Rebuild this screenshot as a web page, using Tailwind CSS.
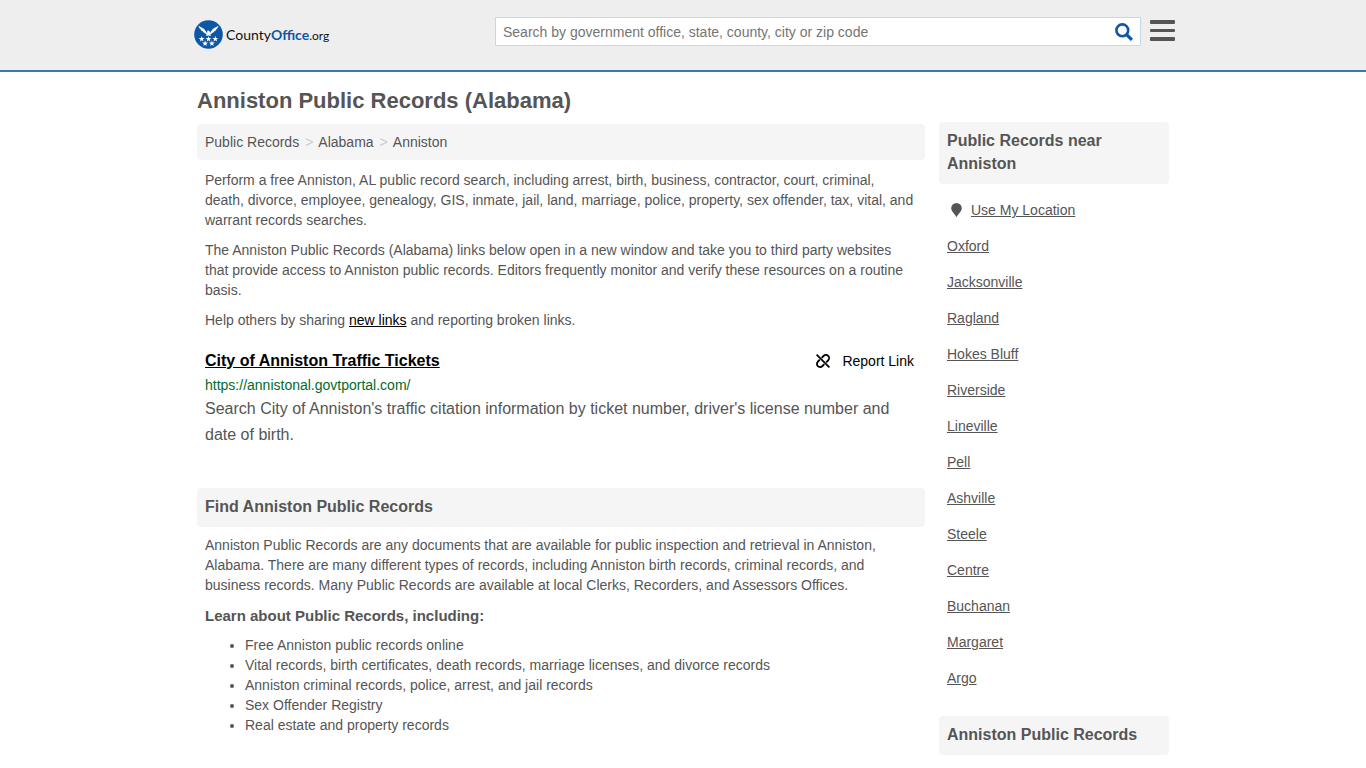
<!DOCTYPE html>
<html lang="en">
<head>
<meta charset="utf-8">
<meta name="viewport" content="width=device-width, initial-scale=1">
<title>Anniston Public Records (Alabama)</title>
<script src="https://cdn.jsdelivr.net/npm/@tailwindcss/browser@4"></script>
</head>
<body class="bg-white font-['Liberation_Sans',Arial,sans-serif] text-sm leading-5 text-[#555]">
<header class="border-b-2 border-[#337ab7] bg-[#eee] px-4">
  <div class="mx-auto flex h-[70px] max-w-[984px] items-start pl-[3px]">
    <a href="#" aria-label="CountyOffice.org" class="mt-5 flex shrink-0 items-center gap-[3px] font-[Lato,sans-serif] text-sm text-[#111]">
      <svg class="size-[29px]" viewBox="0 0 29 29" aria-hidden="true">
        <circle cx="14.5" cy="14.5" r="14.3" fill="#0d57a7"/>
        <g fill="#fff">
          <path d="M4.5 5.8C6.8 7.3 9.6 7.9 11.3 10.6L13.1 13.1L13.5 11.7L12.8 10.9L14.5 10.4L15.7 11.3L15.9 13.1L17.7 10.6C19.4 7.9 22.2 7.3 24.5 5.8C24.1 7.600 23.3 8.7 22.3 9.4C22.1 10.3 21.4 10.8 20.5 11.1C20 12.2 19.3 12.8 18.2 13.1L16.3 14.8L17 15.9L14.500 15.4L12 15.9L12.7 14.8L10.8 13.1C9.7 12.8 9 12.2 8.5 11.1C7.6 10.8 6.9 10.3 6.7 9.4C5.7 8.7 4.900 7.6 4.5 5.8Z"/>
          <path id="star" d="M7.7 15.9L8.4 18L10.6 18.1L8.9 19.4L9.5 21.5L7.7 20.3L5.9 21.5L6.5 19.4L4.8 18.1L7 18Z"/>
          <use href="#star" x="6.8"/><use href="#star" x="13.6"/>
          <use href="#star" x="3.4" y="4.5"/><use href="#star" x="10.2" y="4.5"/>
        </g>
      </svg>
      <span>County<span class="font-bold text-[#0d57a7]">Office</span><span class="text-xs">.org</span></span>
    </a>
    <form class="mt-[17px] ml-auto flex h-[29px] w-full max-w-[646px] border border-[#c5d9e8] bg-white" onsubmit="return false">
      <input type="text" aria-label="Search" placeholder="Search by government office, state, county, city or zip code" class="min-w-0 flex-1 px-[7px] text-sm outline-none placeholder:text-[#757575]">
      <button type="submit" aria-label="Search" class="flex w-8 items-center justify-center">
        <svg class="size-[18px]" viewBox="0 0 18 18" fill="none" stroke="#0d57a7" aria-hidden="true"><circle cx="7.3" cy="7.3" r="5.9" stroke-width="2.6"/><path d="M11.6 11.6L16.9 16.9" stroke-width="3.2"/></svg>
      </button>
    </form>
    <button type="button" aria-label="Menu" class="mt-5 ml-[9px] shrink-0">
      <svg class="h-[21px] w-[25px]" viewBox="0 0 25 21" fill="#555" aria-hidden="true"><rect width="25" height="4" rx="1"/><rect y="9" width="25" height="3" rx="1"/><rect y="17" width="25" height="4" rx="1"/></svg>
    </button>
  </div>
</header>
<div class="mx-auto flex max-w-[972px] items-start gap-3.5">
  <main class="min-w-0 flex-1">
    <h1 class="mt-[17px] mb-[11px] text-[22px] leading-6 font-bold">Anniston Public Records (Alabama)</h1>
    <nav aria-label="Breadcrumb" class="flex rounded-sm bg-[#f5f5f5] p-2">
      <a href="#">Public Records</a><span class="pr-[5px] pl-1.5 text-[#ccc]">&gt;</span>
      <a href="#">Alabama</a><span class="pr-[5px] pl-1.5 text-[#ccc]">&gt;</span>
      <span>Anniston</span>
    </nav>
    <div class="mt-2.5 space-y-2.5 px-2">
      <p>Perform a free Anniston, AL public record search, including arrest, birth, business, contractor, court, criminal, death, divorce, employee, genealogy, GIS, inmate, jail, land, marriage, police, property, sex offender, tax, vital, and warrant records searches.</p>
      <p>The Anniston Public Records (Alabama) links below open in a new window and take you to third party websites that provide access to Anniston public records. Editors frequently monitor and verify these resources on a routine basis.</p>
      <p>Help others by sharing <a href="#" class="text-black underline">new links</a> and reporting broken links.</p>
    </div>
    <article class="mt-[19px] px-2">
      <div class="flex items-center justify-between pr-[3px] text-black">
        <h2 class="text-base leading-6 font-bold"><a href="#" class="underline">City of Anniston Traffic Tickets</a></h2>
        <button type="button" class="flex items-center gap-3">
          <svg class="size-[14px]" viewBox="0 0 14 14" fill="none" stroke="#000" stroke-width="1.8" aria-hidden="true">
            <path d="M.6 .6L13.4 13.4"/>
            <path d="M5.700 3.800L7.5 2C8.9 .6 11 .6 12.2 1.8C13.4 3 13.4 5.1 12 6.5L10.200 8.300"/>
            <path d="M8.300 10.200L6.5 12C5.1 13.4 3 13.4 1.8 12.2C.6 11 .6 8.9 2 7.5L3.800 5.700"/>
          </svg>
          Report Link
        </button>
      </div>
      <p class="mt-0.5 mb-px text-[#006b2b]">https://annistonal.govtportal.com/</p>
      <p class="text-base leading-[26px]">Search City of Anniston's traffic citation information by ticket number, driver's license number and date of birth.</p>
    </article>
    <section class="mt-10">
      <h2 class="rounded-sm bg-[#f5f5f5] px-2 pt-[7px] pb-2 text-base leading-6 font-bold">Find Anniston Public Records</h2>
      <div class="px-2 pt-2">
        <p>Anniston Public Records are any documents that are available for public inspection and retrieval in Anniston, Alabama. There are many different types of records, including Anniston birth records, criminal records, and business records. Many Public Records are available at local Clerks, Recorders, and Assessors Offices.</p>
        <h3 class="mt-[11px] mb-[9px] text-[15px] leading-5 font-bold">Learn about Public Records, including:</h3>
        <ul class="list-disc pl-10">
          <li>Free Anniston public records online</li>
          <li>Vital records, birth certificates, death records, marriage licenses, and divorce records</li>
          <li>Anniston criminal records, police, arrest, and jail records</li>
          <li>Sex Offender Registry</li>
          <li>Real estate and property records</li>
        </ul>
      </div>
    </section>
  </main>
  <aside class="mt-[50px] w-[230px] shrink-0">
    <h2 class="rounded-sm bg-[#f5f5f5] px-2 pt-[7px] pb-[9px] text-base leading-[23px] font-bold">Public Records near Anniston</h2>
    <ul class="mt-2 mb-5 [&>li]:px-2 [&>li]:py-2 [&_a]:underline">
      <li class="flex items-center gap-[9px]">
        <svg class="ml-1 h-[14px] w-[11px]" viewBox="0 0 11 14" fill="#555" aria-hidden="true"><path d="M5.5 0A5.3 5.3 0 0 1 10.8 5.3C10.8 8.2 7.8 10.3 6 13.6Q5.5 14.2 5 13.6C3.2 10.3 .2 8.2 .2 5.3A5.3 5.3 0 0 1 5.5 0Z"/></svg>
        <a href="#">Use My Location</a>
      </li>
      <li><a href="#">Oxford</a></li>
      <li><a href="#">Jacksonville</a></li>
      <li><a href="#">Ragland</a></li>
      <li><a href="#">Hokes Bluff</a></li>
      <li><a href="#">Riverside</a></li>
      <li><a href="#">Lineville</a></li>
      <li><a href="#">Pell</a></li>
      <li><a href="#">Ashville</a></li>
      <li><a href="#">Steele</a></li>
      <li><a href="#">Centre</a></li>
      <li><a href="#">Buchanan</a></li>
      <li><a href="#">Margaret</a></li>
      <li><a href="#">Argo</a></li>
    </ul>
    <h2 class="rounded-sm bg-[#f5f5f5] px-2 pt-[7px] pb-[9px] text-base leading-[23px] font-bold">Anniston Public Records</h2>
  </aside>
</div>
</body>
</html>
